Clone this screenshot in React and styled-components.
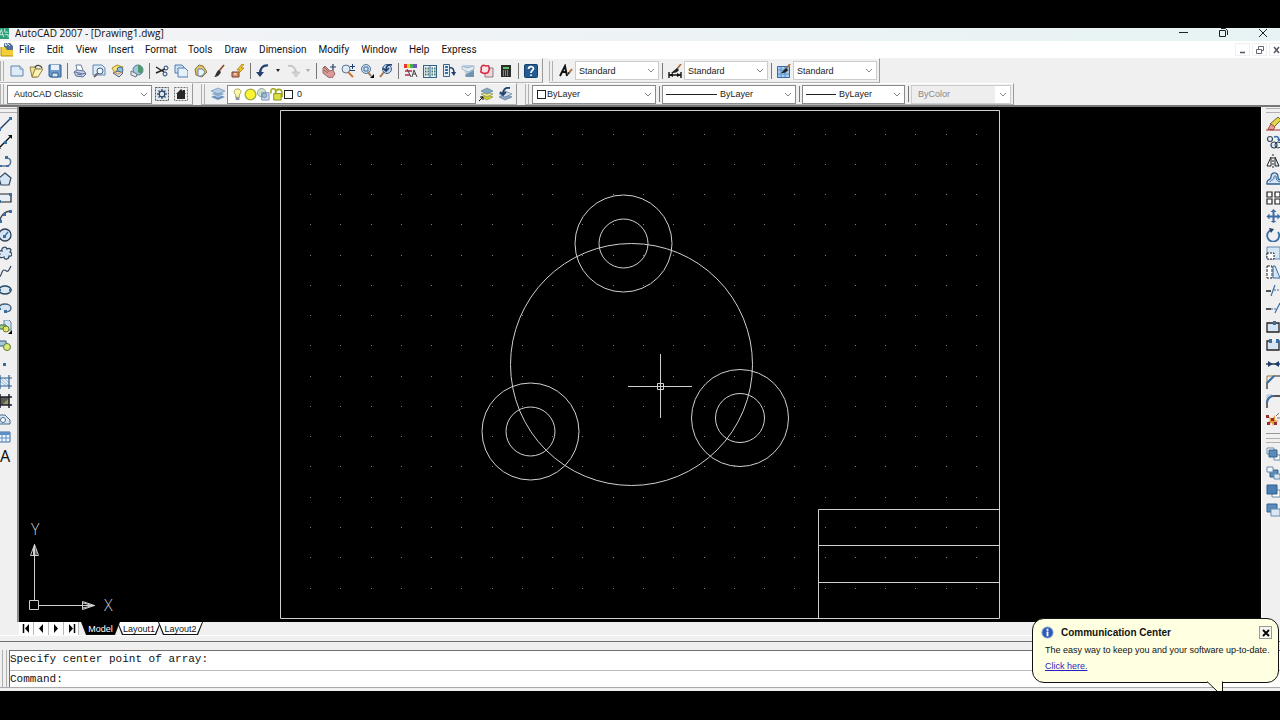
import React from 'react';
import styled, { createGlobalStyle, css } from 'styled-components';

const blue = '#3a6ea5';
const navy = '#1f3f6e';
const pale = '#d5e5f3';
const ink = '#222';

// every icon is drawn on a 14 x 14 grid
const icons = {
  app: <><rect width="14" height="14" fill="#2d9c78" /><path d="M2 12L5 3l3 9M3 9h4M9 2v4h4M9 9h4v3" stroke="#d8f5ea" fill="none" /></>,
  drawing: <><path d="M4 0h6l3 3v6H4z" fill="#4f6f94" /><path d="M5 0l1 3 2-3M8 1l2 2" stroke="#e6eef6" fill="none" /><path d="M1 4h4l2 3h6v6H1z" fill="#f4cf35" /><path d="M1 4v9h12" stroke="#b58d12" fill="none" /></>,
  new: <><path d="M1 2h9l3 3v7H1z" fill="#dcebf7" stroke="#5f86ad" /><path d="M10 2v3h3" fill="#fff" stroke="#5f86ad" /></>,
  open: <><path d="M1 3h5l1 2h4L8 13H3z" fill="#efe39a" stroke="#8f8040" /><path d="M3 13L6 5h8l-5 8z" fill="#fbf3b4" stroke="#8f8040" /><path d="M6 4c1-4 6-3 7 0" fill="none" stroke="#4a4a3a" strokeWidth="1.300" /></>,
  save: <><path d="M1 1h12v12H2L1 12z" fill="#6d9bcb" stroke="#2f5f94" /><path d="M3 1h8v5H3z" fill="#e8f1f9" /><path d="M4 9h6v4H4z" fill="#d8e5f1" stroke="#2f5f94" /></>,
  plot: <><path d="M4 6L3 1h5l2 5" fill="#fff" stroke="#6a7c9a" /><path d="M1 8l3-2 7 1 2 3-3 3-7-1z" fill="#c9d3ea" stroke="#5f6f98" /><path d="M2 8l8 2 3-1M4 10l5 1" fill="none" stroke="#5f6f98" /></>,
  preview: <><path d="M1 1h9l3 3v7H1z" fill="#dcebf7" stroke="#5f86ad" /><circle cx="8" cy="7" r="3" fill="#eff7ff" stroke="#3d5c80" /><path d="M6 9l-4 4" stroke="#6a6a7a" strokeWidth="2" /></>,
  publish: <><path d="M1 4l5-3 6 2-2 5-6 1z" fill="#f6e27a" stroke="#b09028" /><circle cx="9" cy="6" r="3" fill="#8ec1df" stroke="#456f90" /><path d="M2 9l5-2 5 2-4 4z" fill="#d8e2ee" stroke="#4c5f78" /><path d="M3 8l4 2 4-2" fill="none" stroke="#e08d2c" /></>,
  globe: <><circle cx="8" cy="6" r="5" fill="#9fc6e0" stroke="#527a99" /><path d="M8 1c5 0 6 6 3 9L8 8z" fill="#4f9a68" /><path d="M1 7l6 3-1 3-5-2z" fill="#e4e9ef" stroke="#6c7680" /></>,
  cut: <><path d="M1 3l8 5M1 9l9-4" stroke={ink} strokeWidth="1.400" /><circle cx="11" cy="4" r="2" fill="none" stroke={navy} /><circle cx="10" cy="10" r="2" fill="none" stroke={navy} /></>,
  copy: <><path d="M1 1h7l2 2v6H1z" fill="#cfe2f3" stroke="#4f7faf" /><path d="M4 4h7l3 3v6H4z" fill="#e4f0fa" stroke="#4f7faf" /></>,
  paste: <><path d="M2 5l4-4 4 1 4 6-5 5-6-2z" fill="#e0c26f" stroke="#8c7434" /><path d="M5 5h4l3 3-3 4H5z" fill="#eaf2fa" stroke="#6484a8" /></>,
  brush: <><path d="M12 1L7 7" stroke="#8b4a2b" strokeWidth="1.700" /><path d="M7 6l2 2c-1 3-4 5-7 5 2-1 2-6 5-7z" fill="#333" /></>,
  bolt: <><path d="M1 8h7v5H1z" fill="#d8936e" stroke="#7c3f27" /><path d="M3 10h3" stroke="#fff" /><path d="M11 0L6 6h3L6 11l7-7h-3l3-4z" fill="#f7c71e" stroke="#a06d10" strokeWidth=".7" /></>,
  undo: <><path d="M12 1.500C7 1 4 4 4 10" fill="none" stroke="#243f70" strokeWidth="2.200" /><path d="M0 8h8l-4 5z" fill="#243f70" /></>,
  redo: <><path d="M2 2c5-1 8 2 8 8" fill="none" stroke="#c4c6c9" strokeWidth="2" /><path d="M6 8h8l-4 5z" fill="#d3d5d8" stroke="#b4b7ba" strokeWidth=".6" /></>,
  pan: <><path d="M1 4l2-2 5 5 3-1 2 4-3 4-4-1-5-4z" fill="#d79c98" stroke="#9c6362" /><path d="M2 3l5 5M2 6l4 3" stroke="#9c6362" /><path d="M11 0v6M8 3h6" stroke={navy} strokeWidth="1.200" /></>,
  zoom: <><circle cx="5" cy="5" r="4" fill="#dceaf6" stroke="#5c7490" /><path d="M7 8l5 5" stroke="#c87538" strokeWidth="2" /><path d="M11.500 0v5M9 2.500h5M9 6.500h5" stroke={navy} /></>,
  zoomWin: <><circle cx="6" cy="5" r="4.500" fill="#cfe1f2" stroke="#5c7490" /><path d="M4 3h4v4H4z" fill="none" stroke={blue} /><path d="M8 8l3 4" stroke="#9a7a62" strokeWidth="2" /><path d="M14 10v4h-4z" fill="#000" /></>,
  zoomPrev: <><circle cx="8" cy="5" r="4.500" fill="#bcd3ea" stroke="#3f5f88" /><path d="M5 8l-4 5" stroke="#a07454" strokeWidth="2" /><path d="M13 1C9 0 7 2 7 6M4 4l3 3 3-3" fill="none" stroke={navy} strokeWidth="1.600" /></>,
  props: <><path d="M0 0h3v4H0z" fill="#e33" /><path d="M3 0h3v4H3z" fill="#e6d32b" /><path d="M6 0h3v4H6z" fill="#3eb54a" /><path d="M9 0h4v4H9z" fill="#7651c6" /><path d="M1 6h7v2H1zM1 10h5v2H1z" fill="#c65a70" /><path d="M3 5l4 8M8 13l2-7 3 7M9 10h3" fill="none" stroke="#444" /></>,
  dcenter: <><path d="M.5 1.500h13v12H.5z" fill="#eaf3f8" stroke="#376483" strokeWidth="1.200" /><path d="M7 2v11" stroke="#376483" /><path d="M2 4.500h4M2 7.500h4M2 10.500h4M8.500 4.500h4M8.500 7.500h4M8.500 10.500h4" stroke="#477b73" strokeWidth="2" strokeDasharray="1.500 1" /></>,
  palettes: <><path d="M1.500.5h6v12h-6z" fill="#e5eff7" stroke="#39648e" /><path d="M3 3h3M3 6h3M3 9h3" stroke={blue} strokeWidth="2" /><path d="M8 4c3-1 4 2 4 5" fill="none" stroke={navy} strokeWidth="1.500" /><path d="M9 8h5l-2 4z" fill={navy} /></>,
  sheets: <><path d="M2 1h10l1 3v8H5z" fill="#b9cfdf" /><path d="M1 2l5 2 7-2v3L7 8 1 5z" fill="#e4edf3" stroke="#8aa5b9" strokeWidth=".7" /><path d="M4 11l9-5v7H5z" fill="#6f95b1" /></>,
  markup: <><path d="M5 4h8v9H5z" fill="#f2d8dc" stroke="#8c7b80" /><path d="M2 2c2-2 3 0 4 0s3-1 3 1 1 2 0 3 0 3-2 3-3 1-4 0-3 0-2-2-1-3 1-5z" fill="#f6e3e6" stroke="#d9213b" strokeWidth="1.500" /></>,
  calc: <><path d="M2 1h10v12H2z" fill="#2c2c2c" /><path d="M4 3h6v2H4z" fill="#5dc163" /><path d="M4 7h6M4 9h6M4 11h6" stroke="#e2d7c8" strokeDasharray="1 1" /></>,
  help: <><rect x=".5" y=".5" width="13" height="13" rx="1" fill="#245b92" stroke="#123f70" /><path d="M4.500 5c0-3 5-3 5-.5C9.500 6.500 7 6.500 7 9M7 10.500v1.500" fill="none" stroke="#fff" strokeWidth="1.700" /></>,
  textStyle: <><path d="M1 12L6 2l2 10M3 8h5" fill="none" stroke="#111" strokeWidth="1.900" /><path d="M13 5l-3 4" stroke="#b9753b" strokeWidth="2" /><path d="M8 12l1-4 2 1z" fill="#222" /></>,
  dimStyle: <><path d="M1 8v6M13 8v6M1 11h12" stroke="#111" strokeWidth="1.400" /><path d="M1 11l4-2v4zM13 11L9 9v4z" fill="#111" /><path d="M13 0L9 5" stroke="#a86f3d" strokeWidth="1.700" /><path d="M9 4l2 2c-2 3-5 3-8 3z" fill="#222" /></>,
  tableStyle: <><path d="M.5 2.500h12v11H.5z" fill="#a9cbee" stroke="#2f6bad" /><path d="M1 6h11M1 10h11M4 3v10M8 3v10" stroke="#5b90c9" /><path d="M13 0L9 5" stroke="#a86f3d" strokeWidth="1.700" /><path d="M9 4l2 2c-2 3-4 3-7 3z" fill="#222" /></>,
  gear: <><path d="M.5.5h13v13H.5z" fill="#e1e7ee" stroke="#555" strokeDasharray="2 1" /><path d="M7 2v10M2 7h10M3.500 3.500l7 7M10.500 3.500l-7 7" stroke="#47607d" strokeWidth="1.600" /><circle cx="7" cy="7" r="2.800" fill="#dfe8f0" stroke="#2d4766" strokeWidth="1.200" /></>,
  home: <><path d="M.5.5h13v13H.5z" fill="none" stroke="#777" strokeDasharray="2 1" /><path d="M7 2L2 7h1v5h8V7h1l-1-1V3H9v1z" fill="#282828" /></>,
  layers: <><path d="M0 10l7-3 7 3-7 3z" fill="#6d93bd" /><path d="M0 7l7-3 7 3-7 3z" fill="#8db0d3" stroke="#f0f0f0" strokeWidth=".5" /><path d="M0 4l7-3 7 3-7 3z" fill="#b7cfe6" stroke="#5e82a9" strokeWidth=".6" /></>,
  layerCur: <><path d="M2 10l6-2 6 2-6 3z" fill="#d1ca35" stroke="#89842a" strokeWidth=".6" /><path d="M2 7l6-2 6 2-6 3z" fill="#e9e67e" stroke="#6d7f56" strokeWidth=".6" /><path d="M2 4l6-3 6 3-6 3z" fill="#88a9bd" stroke="#50768f" strokeWidth=".6" /><path d="M0 14l4-4M1 10h3v3" fill="none" stroke="#111" /></>,
  layerPrev: <><path d="M1 10l6-3 7 3-7 3z" fill="#89a6c3" stroke="#536f8d" strokeWidth=".6" /><path d="M1 7l6-3 7 3-7 3z" fill="#d4e2ed" stroke="#536f8d" strokeWidth=".6" /><path d="M12 1C7 0 5 3 5 7M2 5l3 3 3-3" fill="none" stroke="#23446f" strokeWidth="1.800" /></>,
  bulb: <><path d="M7 1c5 0 4 5 2 6v3H5V7C3 6 2 1 7 1z" fill="#fbf8a8" stroke="#a5a05a" /><path d="M5 10h4v3H5z" fill="#8c93a0" /></>,
  sun: <><circle cx="7" cy="7" r="6.500" fill="#9cae45" /><circle cx="7" cy="7" r="5" fill="#fff334" /></>,
  freeze: <><circle cx="5" cy="5" r="4.500" fill="#cfe0cc" stroke="#8ba68d" /><path d="M5 5h8v8H5z" fill="#cfdef0" stroke="#7b93b2" /><circle cx="8" cy="8" r="2.500" fill="#a2bdd6" stroke="#6787aa" /></>,
  lock: <><path d="M1 6V3c0-3 5-3 5 0v2M6 6c0-6 7-6 7 0v4" fill="none" stroke="#a2a722" strokeWidth="1.700" /><path d="M4 6h8v7H4z" fill="#dbe03f" stroke="#858a1c" /></>,
  line: <><path d="M1 13L13 1" stroke={navy} strokeWidth="1.300" /><path d="M0 11h3v3H0zM11 0h3v3h-3z" fill={blue} /></>,
  xline: <><path d="M0 14L14 0" stroke="#111" strokeWidth="1.300" /><path d="M0 11v3h3zM14 4V0h-4z" fill="#111" /><path d="M6 6h3v3H6z" fill={blue} /></>,
  pline: <><path d="M1 12h7c6 0 6-8 1-8H8" fill="none" stroke="#597792" strokeWidth="1.500" /><path d="M1 11h3v2H1zM8 11h3v2H8zM7 2h3v3H7z" fill={blue} /></>,
  polygon: <path d="M7 1l6 5-2 7H3L1 6z" fill={pale} stroke="#34495e" strokeWidth="1.200" />,
  rect: <><path d="M1 3h12v8H1z" fill="#e6eff7" stroke={ink} strokeWidth="1.200" /><path d="M0 9h3v3H0zM11 2h3v3h-3z" fill={blue} /></>,
  arc: <><path d="M2 13C2 7 6 2 14 2" fill="none" stroke="#3c4b5b" strokeWidth="1.300" /><path d="M1 11h3v3H1zM5 4h3v3H5zM11 1h3v3h-3z" fill={blue} /></>,
  circle: <><circle cx="7" cy="7" r="6" fill={pale} stroke="#2b3e52" strokeWidth="1.300" /><path d="M6 9l4-5" stroke={blue} strokeWidth="1.300" /><path d="M5 7h3v3H5z" fill={blue} /></>,
  cloud: <path d="M4 5c-1-4 4-5 5-2 3-2 5 1 3 3 3 1 2 5-1 4 0 4-5 4-5 1-4 2-6-1-4-3-2-2 0-4 2-3z" fill={pale} stroke="#34495e" strokeWidth="1.200" />,
  spline: <path d="M0 12c4 1 3-7 6-7s3 5 7-4" fill="none" stroke="#34495e" strokeWidth="1.200" />,
  ellipse: <><ellipse cx="7" cy="7" rx="6" ry="4" fill="#d9e9ef" stroke="#2d4862" strokeWidth="1.400" /><path d="M0 6h3v2H0zM11 6h3v2h-3zM6 2h2v2H6z" fill={blue} /></>,
  ellipseArc: <><path d="M1 8c0-7 12-6 12-1 0 3-2 4-6 4" fill={pale} stroke="#45617d" strokeWidth="1.300" /><path d="M0 7h3v2H0zM6 9h3v3H6z" fill={blue} /></>,
  insert: <><path d="M6 0h5l2 2v8H6z" fill={pale} stroke="#6382a3" /><path d="M1 5h7v4H1z" fill="#a5ce7d" stroke="#2e6c50" /><circle cx="8" cy="9" r="3" fill="#e4e66c" stroke="#637b2a" /><path d="M14 10v4h-4z" fill="#000" /></>,
  block: <><path d="M1 3h7v5H1z" fill="#a8c8dc" stroke="#2f5d7e" /><circle cx="9" cy="9" r="3.500" fill="#dfe77d" stroke="#5c7a2c" /></>,
  point: <path d="M5 6h3v3H5z" fill="#316aa5" />,
  hatch: <><path d="M2 3h9v8H2z" fill="#e9f2fa" /><path d="M2 3l9 8M2 6l6 5M6 3l5 5" stroke="#92b5d5" /><path d="M2 0v14M11 0v14M0 3h14M0 11h14" stroke="#2f608e" strokeWidth="1.200" /></>,
  gradient: <><path d="M2 3h9v8H2z" fill="#5c5d50" /><path d="M4 11l7-7v7z" fill="#9a9a64" /><path d="M2 0v14M11 0v14M0 3h14M0 11h14" stroke="#1c1f2c" strokeWidth="1.500" /></>,
  region: <><path d="M0 12V3h7l5 5v4z" fill={pale} stroke="#46688d" /><circle cx="5" cy="8" r="2.500" fill="#fff" stroke="#46688d" /></>,
  table: <><path d="M0 2h12v10H0z" fill="#eef5fc" stroke="#3f6da4" /><path d="M0 2h12v3H0z" fill="#5d8fc7" /><path d="M0 8h12M4 5v7M8 5v7" stroke="#5d8fc7" /></>,
  erase: <><path d="M12 0l3 3-7 7-4-3z" fill="#e6d54b" stroke="#6f6832" /><path d="M5 7l4 3-2 3-5-1z" fill="#e9a291" stroke="#9a4f45" /><path d="M0 13h14" stroke="#9b3030" /></>,
  copyObj: <><circle cx="4" cy="4" r="2.500" fill="none" stroke="#33475c" strokeWidth="1.200" /><circle cx="8" cy="10" r="3" fill="#dce9f5" stroke="#33475c" strokeWidth="1.200" /><circle cx="12" cy="10" r="3" fill="none" stroke="#33475c" /><path d="M8 2c3-1 5 0 5 3" fill="none" stroke={blue} strokeWidth="1.500" /><path d="M11 4h4l-2 3z" fill={blue} /></>,
  mirror: <><path d="M1 12l4-9v9z" fill="#fff" stroke={ink} /><path d="M9 3l4 9H9z" fill={pale} stroke={ink} /><path d="M7 0v14" stroke={ink} strokeDasharray="2 1" /></>,
  offset: <><path d="M1 12c-1-6 4-3 4-7 0-6 7-5 7 0 0 3 3 3 3 3v4z" fill={pale} stroke="#315f91" strokeWidth="1.300" /><path d="M4 10c1-3 4-1 4-5 0-2 3-1 2 0 0 3 2 5 5 5" fill="none" stroke={blue} /></>,
  array: <path d="M1 1h5v5H1zM9 1h5v5H9zM1 8h5v5H1zM9 8h5v5H9z" fill="#fff" stroke="#222" strokeWidth="1.200" />,
  move: <path d="M7.500 0l3 3h-2v3.500h3v-2l3 3-3 3v-2h-3v3.500h2l-3 2-3-2h2V8.500h-3v2l-3-3 3-3v2h3V3h-2z" fill={blue} />,
  rotate: <><path d="M5 2a6 6 0 107 2" fill="none" stroke={blue} strokeWidth="1.800" /><path d="M3 0l5 1-3 4z" fill={navy} /></>,
  scale: <><path d="M1 1h13v12H1z" fill={pale} stroke="#6488ac" /><path d="M1 7h7v6H1z" fill="#fff" stroke={ink} strokeDasharray="2 1" /></>,
  stretch: <><path d="M1 1h5v12H1z" fill="#fff" stroke={ink} strokeDasharray="3 1" /><path d="M7 1h2l5 12H7z" fill={pale} stroke={blue} /></>,
  trim: <><path d="M0 8h5" stroke={ink} strokeWidth="1.500" /><path d="M5 13l4-11" stroke={blue} strokeWidth="1.200" /><path d="M8 7h6" stroke={blue} strokeDasharray="2 1" /></>,
  extend: <><path d="M0 8h5" stroke={ink} strokeWidth="1.500" /><path d="M5 8h5" stroke={blue} strokeDasharray="2 1" /><path d="M9 12l5-10" stroke={blue} strokeWidth="1.200" /></>,
  breakPt: <><path d="M1 3h12v9H1z" fill={pale} stroke={ink} strokeWidth="1.300" /><path d="M7 1h3v4H7z" fill={blue} /></>,
  breakObj: <><path d="M1 3h12v9H1z" fill={pale} /><path d="M5 3H1v9h12V3h-3" fill="none" stroke={ink} strokeWidth="1.300" /><path d="M3 1h3v4H3zM10 1h3v4h-3z" fill={blue} /></>,
  join: <><path d="M0 7h14" stroke={ink} strokeWidth="1.300" /><path d="M2 4l5 3-5 3zM13 4L8 7l5 3z" fill={navy} /></>,
  chamfer: <><path d="M1 8V1h7" fill="none" stroke="#a0743c" /><path d="M1 14V8l7-7h6" fill="none" stroke={ink} strokeWidth="1.200" /><path d="M1 8l7-7" stroke={blue} strokeWidth="2" /></>,
  fillet: <><path d="M1 1h5L1 6z" fill={pale} stroke="#a8b8c8" /><path d="M1 14V9c0-4 3-7 7-7h6" fill="none" stroke={ink} strokeWidth="1.300" /><path d="M1 9c0-4 3-7 7-7" fill="none" stroke={blue} strokeWidth="2" /></>,
  explode: <><path d="M2 4l4 3 3-4v5l4 1-4 1-2 4-1-3-5 1 3-4z" fill="#e39a3f" /><path d="M0 3h3v3H0zM1 10h3v3H1zM5 6h3v3H5zM8 10h3v3H8z" fill="#982b2b" /><path d="M10 4l3-3M11 6h3" stroke="#777" /></>,
  front: <><path d="M1 1h7v6H1z" fill="#fff" stroke="#6a8aac" /><path d="M8 8h6v5H8z" fill="#fff" stroke="#6a8aac" /><path d="M3 3h8v7H3z" fill="#5c8bba" stroke="#33628f" /></>,
  back: <><path d="M4 4h8v7H4z" fill="#5c8bba" stroke="#33628f" /><path d="M1 1h6v5H1z" fill="#f2f7fc" stroke="#6a8aac" /><path d="M8 8h6v5H8z" fill="#dbe8f4" stroke="#6a8aac" /></>,
  above: <><path d="M6 6h8v7H6z" fill="#fff" stroke="#6a8aac" /><path d="M1 1h10v9H1z" fill="#4c7fb3" stroke="#2e5b8a" /></>,
  under: <><path d="M1 1h10v8H1z" fill="#5c8bba" stroke="#33628f" /><path d="M5 6h9v7H5z" fill="#dbe8f4" stroke="#6a8aac" /></>,
  info: <><circle cx="7" cy="7" r="6" fill="#2d59b8" stroke="#8aa4d6" /><path d="M7 3v2M7 6v5" stroke="#fff" strokeWidth="2" /></>,
};

const Icon = ({ name, size = 14 }) => (
  <svg width={size} height={size} viewBox="0 0 14 14" aria-hidden="true">{icons[name]}</svg>
);

const Chevron = () => (
  <svg width="8" height="5" viewBox="0 0 8 5" aria-hidden="true">
    <path d="M1 1l3 3 3-3" fill="none" stroke="#888" />
  </svg>
);

const menus = ['File', 'Edit', 'View', 'Insert', 'Format', 'Tools', 'Draw', 'Dimension', 'Modify', 'Window', 'Help', 'Express'];

const standardTools = [
  'new', 'open', 'save', '|', 'plot', 'preview', 'publish', 'globe', '|',
  'cut', 'copy', 'paste', 'brush', 'bolt', '|', 'undo', 'v', 'redo', 'v', '|',
  'pan', 'zoom', 'zoomWin', 'zoomPrev', '|',
  'props', 'dcenter', 'palettes', 'sheets', 'markup', 'calc', '|', 'help',
];

const drawTools = [
  'line', 'xline', 'pline', 'polygon', 'rect', 'arc', 'circle', 'cloud', 'spline', 'ellipse',
  'ellipseArc', 'insert', 'block', 'point', 'hatch', 'gradient', 'region', 'table', 'mtext',
];

const modifyTools = [
  'erase', 'copyObj', 'mirror', 'offset', 'array', 'move', 'rotate', 'scale', 'stretch',
  'trim', 'extend', 'breakPt', 'breakObj', 'join', 'chamfer', 'fillet', 'explode',
];

const orderTools = ['front', 'back', 'above', 'under'];

const Tools = ({ items }) => items.map((item, i) => {
  if (item === '|') return <Separator key={i} />;
  if (item === 'v') {
    return <DropButton key={i} aria-label="history" $dim={i > 17}><i /></DropButton>;
  }
  return <ToolButton key={i} aria-label={item}><Icon name={item} /></ToolButton>;
});

const Combo = ({ label, value, width, indent, dark, disabled, children }) => (
  <ComboBox $width={width} $dark={dark} $disabled={disabled}>
    <Select aria-label={label} defaultValue={value} disabled={disabled} $indent={indent}>
      <option>{value}</option>
    </Select>
    {children && <ComboArt>{children}</ComboArt>}
    <ComboArrow><Chevron /></ComboArrow>
  </ComboBox>
);

const LineSample = ({ width }) => (
  <svg width={width} height="3" aria-hidden="true"><path d={`M0 1.500H${width}`} stroke="#222" /></svg>
);

const Drawing = () => {
  const dots = [];
  for (let row = 0; row < 16; row++) {
    for (let col = 0; col < 23; col++) {
      dots.push(`M${Math.round(310 + col * 30.27)} ${Math.floor(134 + row * 30.27)}h1v1h-1z`);
    }
  }
  return (
    <Canvas viewBox="19 107 1242 515" role="img" aria-label="Drawing1.dwg">
      <path d={dots.join('')} fill="#808080" shapeRendering="crispEdges" />
      <g fill="none" stroke="#d0d0d0">
        <path d="M280.500 110.500H999.500V618.500H280.500zM818.500 618V509.500H999M818 545.500H999M818 582.500H999" />
        <circle cx="631.500" cy="364.500" r="121" />
        <circle cx="623.500" cy="243.500" r="48.500" />
        <circle cx="623.500" cy="243.500" r="24.500" />
        <circle cx="530.500" cy="431.500" r="48.500" />
        <circle cx="530.500" cy="431.500" r="24.500" />
        <circle cx="740" cy="418" r="48.500" />
        <circle cx="740" cy="418" r="24.500" />
        <path d="M628 386.500H692M660.500 354V418M657.500 383.500h6v6h-6z" />
        <path d="M29.500 600.500h9v9h-9zM39 605.500H95M34.500 600V544M34.500 544.500l-4 11h8zM33.500 548v7M36 549v6M94.500 605.500l-12-4v8zM83 603l8 2M83 608l8-2" />
      </g>
      <UcsLabel x="104" y="611">X</UcsLabel>
      <UcsLabel x="31" y="535">Y</UcsLabel>
    </Canvas>
  );
};

const App = () => (
  <>
    <GlobalStyle />
    <Frame>
      <TitleBar>
        <Icon name="app" size={12} />
        <Title>AutoCAD 2007 - [Drawing1.dwg]</Title>
        <WindowButton aria-label="Minimize"><svg width="10" height="10"><path d="M1 4.500h9" stroke="#222" /></svg></WindowButton>
        <WindowButton aria-label="Restore">
          <svg width="10" height="10"><path d="M1.500 2.500h6v6h-6zM3 .5h4.500l2 2V7" fill="none" stroke="#222" /></svg>
        </WindowButton>
        <WindowButton aria-label="Close"><svg width="10" height="10"><path d="M1 1l8 8M9 1L1 9" stroke="#222" /></svg></WindowButton>
      </TitleBar>

      <MenuBar>
        <Icon name="drawing" />
        <MenuList>
          {menus.map(m => <MenuItem key={m}>{m}</MenuItem>)}
        </MenuList>
        <MdiButton aria-label="Minimize drawing"><svg width="8" height="8"><path d="M1 6.500h5" stroke="#556" strokeWidth="1.500" /></svg></MdiButton>
        <MdiButton aria-label="Restore drawing">
          <svg width="8" height="8"><path d="M2.500 3V.5h5v4H6M.5 3.500h5v4h-5z" fill="none" stroke="#667" /></svg>
        </MdiButton>
        <MdiButton aria-label="Close drawing"><svg width="8" height="8"><path d="M1 1l5 6M6 1L1 7" stroke="#556" strokeWidth="1.500" /></svg></MdiButton>
      </MenuBar>

      <ToolRow $gap={6}>
        <Toolbar>
          <Grip />
          <Tools items={standardTools} />
        </Toolbar>
        <Toolbar>
          <Grip />
          <ToolButton aria-label="Text style"><Icon name="textStyle" /></ToolButton>
          <Combo label="Text style" value="Standard" width={84} />
          <Separator />
          <ToolButton aria-label="Dimension style"><Icon name="dimStyle" /></ToolButton>
          <Combo label="Dimension style" value="Standard" width={84} />
          <Separator />
          <ToolButton aria-label="Table style"><Icon name="tableStyle" /></ToolButton>
          <Combo label="Table style" value="Standard" width={84} />
        </Toolbar>
      </ToolRow>

      <ToolRow $gap={8}>
        <Toolbar>
          <Grip />
          <Combo label="Workspace" value="AutoCAD Classic" width={145} indent={6} dark />
          <Tools items={['gear', 'home']} />
        </Toolbar>
        <Toolbar>
          <Grip />
          <Tools items={['layers']} />
          <Combo label="Layer" value="0" width={249} indent={69} dark>
            <Icon name="bulb" size={13} />
            <Icon name="sun" size={13} />
            <Icon name="freeze" size={13} />
            <Icon name="lock" size={13} />
            <Swatch />
          </Combo>
          <Tools items={['layerCur', 'layerPrev']} />
        </Toolbar>
        <Toolbar>
          <Grip />
          <Combo label="Color" value="ByLayer" width={124} indent={14} dark><Swatch /></Combo>
          <Separator />
          <Combo label="Linetype" value="ByLayer" width={134} indent={57} dark><LineSample width={51} /></Combo>
          <Separator />
          <Combo label="Lineweight" value="ByLayer" width={103} indent={36} dark><LineSample width={30} /></Combo>
          <Separator />
          <Combo label="Plot style" value="ByColor" width={100} indent={6} disabled />
        </Toolbar>
      </ToolRow>

      <Workspace>
        <SidePanel>
          <SideGrip />
          <SideTools $height={350}>
            {drawTools.map(t => (
              <SideButton key={t} aria-label={t}>{t === 'mtext' ? 'A' : <Icon name={t} />}</SideButton>
            ))}
          </SideTools>
        </SidePanel>
        <Drawing />
        <SidePanel $right>
          <SideGrip />
          <SideTools $height={314} $end>
            {modifyTools.map(t => <SideButton key={t} aria-label={t}><Icon name={t} /></SideButton>)}
          </SideTools>
          <SideGrip />
          <SideTools $height={74}>
            {orderTools.map(t => <SideButton key={t} aria-label={t}><Icon name={t} /></SideButton>)}
          </SideTools>
        </SidePanel>
      </Workspace>

      <TabBar>
        <NavButton aria-label="First"><svg width="9" height="9"><path d="M1.500 0v9" stroke="#000" strokeWidth="1.500" /><path d="M7 0v9L3 4.500z" /></svg></NavButton>
        <NavButton aria-label="Previous"><svg width="9" height="9"><path d="M6 0v9L2 4.500z" /></svg></NavButton>
        <NavButton aria-label="Next"><svg width="9" height="9"><path d="M2 0v9l4-4.500z" /></svg></NavButton>
        <NavButton aria-label="Last"><svg width="9" height="9"><path d="M7.500 0v9" stroke="#000" strokeWidth="1.500" /><path d="M2 0v9l4-4.500z" /></svg></NavButton>
        <Tab $active $width={39}>Model</Tab>
        <Tab $width={44}>Layout1</Tab>
        <Tab $width={45}>Layout2</Tab>
      </TabBar>

      <CommandDock>
        <CommandGrip />
        <CommandBox>
          <History>Specify center point of array:</History>
          <Prompt>
            <label htmlFor="command">Command:</label>
            <input id="command" type="text" autoComplete="off" />
          </Prompt>
        </CommandBox>
      </CommandDock>
      <StatusEdge />

      <Balloon>
        <BalloonHead>
          <Icon name="info" size={13} />
          <strong>Communication Center</strong>
          <BalloonClose aria-label="Close message"><svg width="8" height="8"><path d="M1 1l6 6M7 1L1 7" stroke="#000" strokeWidth="1.800" /></svg></BalloonClose>
        </BalloonHead>
        <BalloonText>The easy way to keep you and your software up-to-date.</BalloonText>
        <BalloonLink href="#communication">Click here.</BalloonLink>
        <Tail width="17" height="10" viewBox="0 0 17 10" aria-hidden="true">
          <path d="M0 0v1l10 9h5V0z" fill="#ffffe1" />
          <path d="M0 .5L10 10M15.500 .5V10" fill="none" stroke="#111" />
        </Tail>
      </Balloon>
    </Frame>
  </>
);

const GlobalStyle = createGlobalStyle`
  * {
    box-sizing: border-box;
  }
  body {
    margin: 0;
    background: #000;
    overflow: hidden;
  }
  svg {
    display: block;
    flex: none;
  }
  button {
    font: inherit;
    color: inherit;
    padding: 0;
    border: 0;
    background: none;
    display: flex;
    align-items: center;
    justify-content: center;
    flex: none;
  }
  p {
    margin: 0;
  }
`;

const Frame = styled.div`
  position: relative;
  display: flex;
  flex-direction: column;
  height: calc(100vh - 57px);
  margin: 28px 0 29px;
  overflow: hidden;
  background: #f0f0f0;
  color: #111;
  font: 9px/12px 'Liberation Sans', sans-serif;
`;

const TitleBar = styled.div`
  display: flex;
  align-items: center;
  flex: none;
  height: 13px;
  padding-bottom: 4px;
  gap: 6px;
  background: linear-gradient(to right, #f3f3f6, #e7f3f4);
  > svg:first-child {
    margin-left: -3px;
  }
`;

const Title = styled.span`
  flex: 1;
  font: 10px/10px 'Open Sans', sans-serif;
`;

const WindowButton = styled.button`
  width: 34px;
`;

const MenuBar = styled.div`
  display: flex;
  align-items: center;
  flex: none;
  height: 17px;
  background: #fff;
`;

const MenuList = styled.nav`
  display: flex;
  flex: 1;
  margin-left: -1px;
`;

const MenuItem = styled.button`
  padding: 0 6px;
  font: 10px/16px Roboto, sans-serif;
  &:nth-child(n + 3):nth-child(-n + 5) {
    padding-right: 5px;
  }
`;

const MdiButton = styled.button`
  width: 15px;
  height: 13px;
  margin-left: 2px;
  border: 1px solid #f0f0f0;
  &:last-child {
    margin-right: -4px;
  }
`;

const ToolRow = styled.div`
  display: flex;
  flex: none;
  gap: ${p => p.$gap}px;
  height: 25px;
  & + & {
    height: 24px;
    border-bottom: 2px solid #777;
  }
`;

const Toolbar = styled.div`
  display: flex;
  align-items: center;
  flex: none;
  padding: 1px 2px 1px 0;
  border-top: 1px solid #fff;
  border-right: 1px solid #999;
  border-bottom: 1px solid #b4b4b4;
`;

const Grip = styled.span`
  width: 4px;
  height: 20px;
  margin-right: 3px;
  border: solid #b0b0b0;
  border-width: 0 1px;
`;

const ToolButton = styled.button`
  width: 19px;
  height: 20px;
`;

const DropButton = styled.button`
  width: 11px;
  height: 20px;
  i {
    border: solid transparent;
    border-top-color: ${p => (p.$dim ? '#aaa' : '#222')};
    border-width: 3px 2px 0;
  }
`;

const Separator = styled.span`
  width: 1px;
  height: 16px;
  margin: 0 2px 0 3px;
  background: #777;
`;

const ComboBox = styled.div`
  position: relative;
  width: ${p => p.$width}px;
  height: 19px;
  border: 1px solid ${p => (p.$dark ? '#8a8a8a' : '#ccc')};
  background: #fff;
  ${p => p.$disabled && css`
    border-color: #ccc;
    background: linear-gradient(to left, #fff 15px, #eee 15px);
  `}
`;

const Select = styled.select`
  appearance: none;
  width: 100%;
  height: 100%;
  margin: 0;
  padding: 0 16px 0 ${p => p.$indent || 3}px;
  border: 0;
  outline: 0;
  background: none;
  color: #222;
  font: inherit;
  &:disabled {
    color: #888;
    opacity: 1;
  }
`;

const ComboArt = styled.span`
  position: absolute;
  inset: 0 auto 0 3px;
  display: flex;
  align-items: center;
  pointer-events: none;
`;

const ComboArrow = styled.span`
  position: absolute;
  inset: 0 3px 0 auto;
  display: flex;
  align-items: center;
  pointer-events: none;
`;

const Swatch = styled.span`
  width: 9px;
  height: 9px;
  margin-left: 1px;
  border: 1px solid #222;
  background: #fff;
`;

const Workspace = styled.div`
  display: flex;
  flex: 1;
  min-height: 0;
`;

const SidePanel = styled.div`
  flex: none;
  width: 19px;
  overflow: hidden;
  border-right: 2px solid #8a8a8a;
  ${p => p.$right && css`
    padding-left: 4px;
    border-right: 0;
    border-left: 1px solid #fff;
  `}
`;

const SideGrip = styled.div`
  height: 5px;
  margin: 1px 0 2px;
  border: solid #b0b0b0;
  border-width: 1px 0;
`;

const SideTools = styled.div`
  display: flex;
  flex-direction: column;
  align-items: flex-start;
  justify-content: space-between;
  height: ${p => p.$height}px;
  margin-left: -2px;
  ${SidePanel}:last-of-type & {
    margin-left: 0;
  }
  ${p => p.$end && css`
    height: ${p.$height + 5}px;
    padding-bottom: 5px;
    border-bottom: 1px solid #999;
    & + ${SideGrip} {
      margin: 4px 0 2px;
    }
  `}
`;

const SideButton = styled.button`
  width: 14px;
  height: 18px;
  font: 16px/18px 'Noto Sans', sans-serif;
`;

const Canvas = styled.svg`
  flex: 1 1 0;
  min-width: 0;
  height: 100%;
  background: #000;
`;

const UcsLabel = styled.text`
  fill: #c8c8c8;
  font: 300 16px 'Open Sans', sans-serif;
`;

const TabBar = styled.div`
  display: flex;
  flex: none;
  height: 20px;
  padding: 0 0 6px 19px;
  border-bottom: 1px solid #707070;
  background: linear-gradient(#f0f0f0 13px, #fff 13px, #fff 14px, #f0f0f0 14px);
`;

const NavButton = styled.button`
  width: 15px;
  height: 13px;
  border-right: 1px solid #bbb;
  background: #fff;
`;

const Tab = styled.button`
  position: relative;
  z-index: ${p => (p.$active ? 1 : 0)};
  width: ${p => p.$width}px;
  height: 13px;
  margin-left: -3px;
  color: ${p => (p.$active ? '#fff' : '#111')};
  isolation: isolate;
  ${NavButton} + & {
    margin-left: 2px;
  }
  &::before,
  &::after {
    content: '';
    position: absolute;
    inset: 0;
    z-index: -2;
    background: #111;
    clip-path: polygon(0 0, 100% 0, calc(100% - 5px) 100%, 5px 100%);
  }
  &::after {
    inset: 0 1px 1px;
    z-index: -1;
    background: ${p => (p.$active ? '#000' : '#fff')};
  }
`;

const CommandDock = styled.div`
  display: flex;
  flex: none;
  padding-top: 8px;
`;

const CommandGrip = styled.span`
  width: 5px;
  margin: 0 2px;
  border: solid #b0b0b0;
  border-width: 0 1px;
`;

const CommandBox = styled.div`
  flex: 1;
  border: solid #707070;
  border-width: 1px 0 0 1px;
  background: #fff;
  font: 11px/16px 'Liberation Mono', monospace;
`;

const History = styled.div`
  height: 20px;
  border-bottom: 1px solid #bbb;
`;

const Prompt = styled.div`
  display: flex;
  height: 16px;
  input {
    flex: 1;
    padding: 0;
    border: 0;
    outline: 0;
    background: none;
    font: inherit;
  }
`;

const StatusEdge = styled.div`
  flex: none;
  height: 4px;
  border-top: 1px solid #aaa;
  background: #f0f0f0;
`;

const Balloon = styled.aside`
  position: absolute;
  right: 1px;
  bottom: 8px;
  width: 247px;
  height: 65px;
  padding: 7px 6px 0 8px;
  border: 1px solid #111;
  border-radius: 12px;
  background: #ffffe1;
`;

const BalloonHead = styled.div`
  display: flex;
  align-items: center;
  gap: 7px;
  height: 13px;
  strong {
    flex: 1;
    font-size: 10px;
  }
`;

const BalloonText = styled.p`
  margin: 5px 0 4px 4px;
  white-space: nowrap;
`;

const BalloonLink = styled.a`
  display: block;
  width: max-content;
  margin-left: 4px;
  color: #2a1fc4;
`;

const BalloonClose = styled.button`
  width: 13px;
  height: 13px;
  border: 1px solid #999;
  background: #f4f4ec;
`;

const Tail = styled.svg`
  position: absolute;
  right: 54px;
  top: 62px;
`;

export default App;
